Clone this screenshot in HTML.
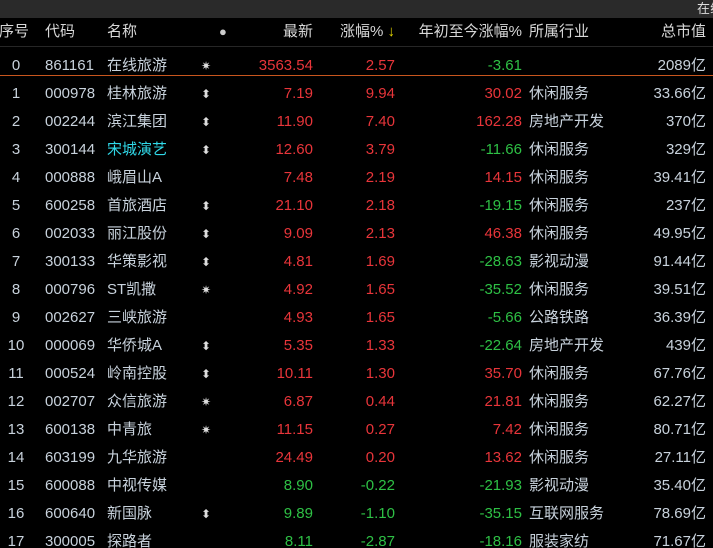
<!DOCTYPE html><html><head><meta charset="utf-8"><style>
html,body{margin:0;width:713px;height:548px;overflow:hidden}
body{background:#000;font-family:"Liberation Sans","Noto Sans CJK SC",sans-serif;font-size:15px;color:#c8d2dc;position:relative}
.top{position:absolute;left:0;top:0;width:713px;height:18px;background:#2a2a2a;overflow:hidden}
.top span{position:absolute;left:697px;top:0;font-size:13px;color:#ddd;line-height:18px;white-space:nowrap}
.hd{position:absolute;top:18px;left:0;width:713px;height:28px;border-bottom:1px solid #262626;color:#d8d8d8}
.r{position:absolute;left:0;width:713px;height:28px}
.c{position:absolute;line-height:28px;white-space:nowrap}
.i{left:0;width:32px;text-align:center}
.k{left:45px}
.n{left:107px}
.s{left:199px;width:14px;text-align:center;font-size:12px;color:#ddd}
.p{right:400px}
.z{right:318px}
.y{right:191px}
.h{left:529px}
.m{right:7px}
.red{color:#e8353a}.grn{color:#2ec045}
</style></head><body>
<div class="top"><span>在线</span></div>
<div class="hd">
<div class="c i" style="left:-2px">序号</div><div class="c k">代码</div><div class="c n">名称</div>
<div class="c" style="left:219px;color:#ccc;font-size:13px">●</div>
<div class="c p">最新</div><div class="c" style="right:318px">涨幅%&nbsp;<span style="color:#e6d800">↓</span></div>
<div class="c y">年初至今涨幅%</div><div class="c h">所属行业</div><div class="c m">总市值</div>
</div>
<div style="position:absolute;left:0;top:75px;width:713px;height:1px;background:#c8561e"></div>
<div class="r" style="top:52px"><div class="c i">0</div><div class="c k">861161</div><div class="c n">在线旅游</div><div class="c s">✷</div><div class="c p red">3563.54</div><div class="c z red">2.57</div><div class="c y grn">-3.61</div><div class="c h"></div><div class="c m">2089亿</div></div>
<div class="r" style="top:80px"><div class="c i">1</div><div class="c k">000978</div><div class="c n">桂林旅游</div><div class="c s">⬍</div><div class="c p red">7.19</div><div class="c z red">9.94</div><div class="c y red">30.02</div><div class="c h">休闲服务</div><div class="c m">33.66亿</div></div>
<div class="r" style="top:108px"><div class="c i">2</div><div class="c k">002244</div><div class="c n">滨江集团</div><div class="c s">⬍</div><div class="c p red">11.90</div><div class="c z red">7.40</div><div class="c y red">162.28</div><div class="c h">房地产开发</div><div class="c m">370亿</div></div>
<div class="r" style="top:136px"><div class="c i">3</div><div class="c k">300144</div><div class="c n" style="color:#30d8e8">宋城演艺</div><div class="c s">⬍</div><div class="c p red">12.60</div><div class="c z red">3.79</div><div class="c y grn">-11.66</div><div class="c h">休闲服务</div><div class="c m">329亿</div></div>
<div class="r" style="top:164px"><div class="c i">4</div><div class="c k">000888</div><div class="c n">峨眉山A</div><div class="c s"></div><div class="c p red">7.48</div><div class="c z red">2.19</div><div class="c y red">14.15</div><div class="c h">休闲服务</div><div class="c m">39.41亿</div></div>
<div class="r" style="top:192px"><div class="c i">5</div><div class="c k">600258</div><div class="c n">首旅酒店</div><div class="c s">⬍</div><div class="c p red">21.10</div><div class="c z red">2.18</div><div class="c y grn">-19.15</div><div class="c h">休闲服务</div><div class="c m">237亿</div></div>
<div class="r" style="top:220px"><div class="c i">6</div><div class="c k">002033</div><div class="c n">丽江股份</div><div class="c s">⬍</div><div class="c p red">9.09</div><div class="c z red">2.13</div><div class="c y red">46.38</div><div class="c h">休闲服务</div><div class="c m">49.95亿</div></div>
<div class="r" style="top:248px"><div class="c i">7</div><div class="c k">300133</div><div class="c n">华策影视</div><div class="c s">⬍</div><div class="c p red">4.81</div><div class="c z red">1.69</div><div class="c y grn">-28.63</div><div class="c h">影视动漫</div><div class="c m">91.44亿</div></div>
<div class="r" style="top:276px"><div class="c i">8</div><div class="c k">000796</div><div class="c n">ST凯撒</div><div class="c s">✷</div><div class="c p red">4.92</div><div class="c z red">1.65</div><div class="c y grn">-35.52</div><div class="c h">休闲服务</div><div class="c m">39.51亿</div></div>
<div class="r" style="top:304px"><div class="c i">9</div><div class="c k">002627</div><div class="c n">三峡旅游</div><div class="c s"></div><div class="c p red">4.93</div><div class="c z red">1.65</div><div class="c y grn">-5.66</div><div class="c h">公路铁路</div><div class="c m">36.39亿</div></div>
<div class="r" style="top:332px"><div class="c i">10</div><div class="c k">000069</div><div class="c n">华侨城A</div><div class="c s">⬍</div><div class="c p red">5.35</div><div class="c z red">1.33</div><div class="c y grn">-22.64</div><div class="c h">房地产开发</div><div class="c m">439亿</div></div>
<div class="r" style="top:360px"><div class="c i">11</div><div class="c k">000524</div><div class="c n">岭南控股</div><div class="c s">⬍</div><div class="c p red">10.11</div><div class="c z red">1.30</div><div class="c y red">35.70</div><div class="c h">休闲服务</div><div class="c m">67.76亿</div></div>
<div class="r" style="top:388px"><div class="c i">12</div><div class="c k">002707</div><div class="c n">众信旅游</div><div class="c s">✷</div><div class="c p red">6.87</div><div class="c z red">0.44</div><div class="c y red">21.81</div><div class="c h">休闲服务</div><div class="c m">62.27亿</div></div>
<div class="r" style="top:416px"><div class="c i">13</div><div class="c k">600138</div><div class="c n">中青旅</div><div class="c s">✷</div><div class="c p red">11.15</div><div class="c z red">0.27</div><div class="c y red">7.42</div><div class="c h">休闲服务</div><div class="c m">80.71亿</div></div>
<div class="r" style="top:444px"><div class="c i">14</div><div class="c k">603199</div><div class="c n">九华旅游</div><div class="c s"></div><div class="c p red">24.49</div><div class="c z red">0.20</div><div class="c y red">13.62</div><div class="c h">休闲服务</div><div class="c m">27.11亿</div></div>
<div class="r" style="top:472px"><div class="c i">15</div><div class="c k">600088</div><div class="c n">中视传媒</div><div class="c s"></div><div class="c p grn">8.90</div><div class="c z grn">-0.22</div><div class="c y grn">-21.93</div><div class="c h">影视动漫</div><div class="c m">35.40亿</div></div>
<div class="r" style="top:500px"><div class="c i">16</div><div class="c k">600640</div><div class="c n">新国脉</div><div class="c s">⬍</div><div class="c p grn">9.89</div><div class="c z grn">-1.10</div><div class="c y grn">-35.15</div><div class="c h">互联网服务</div><div class="c m">78.69亿</div></div>
<div class="r" style="top:528px"><div class="c i">17</div><div class="c k">300005</div><div class="c n">探路者</div><div class="c s"></div><div class="c p grn">8.11</div><div class="c z grn">-2.87</div><div class="c y grn">-18.16</div><div class="c h">服装家纺</div><div class="c m">71.67亿</div></div>
</body></html>
